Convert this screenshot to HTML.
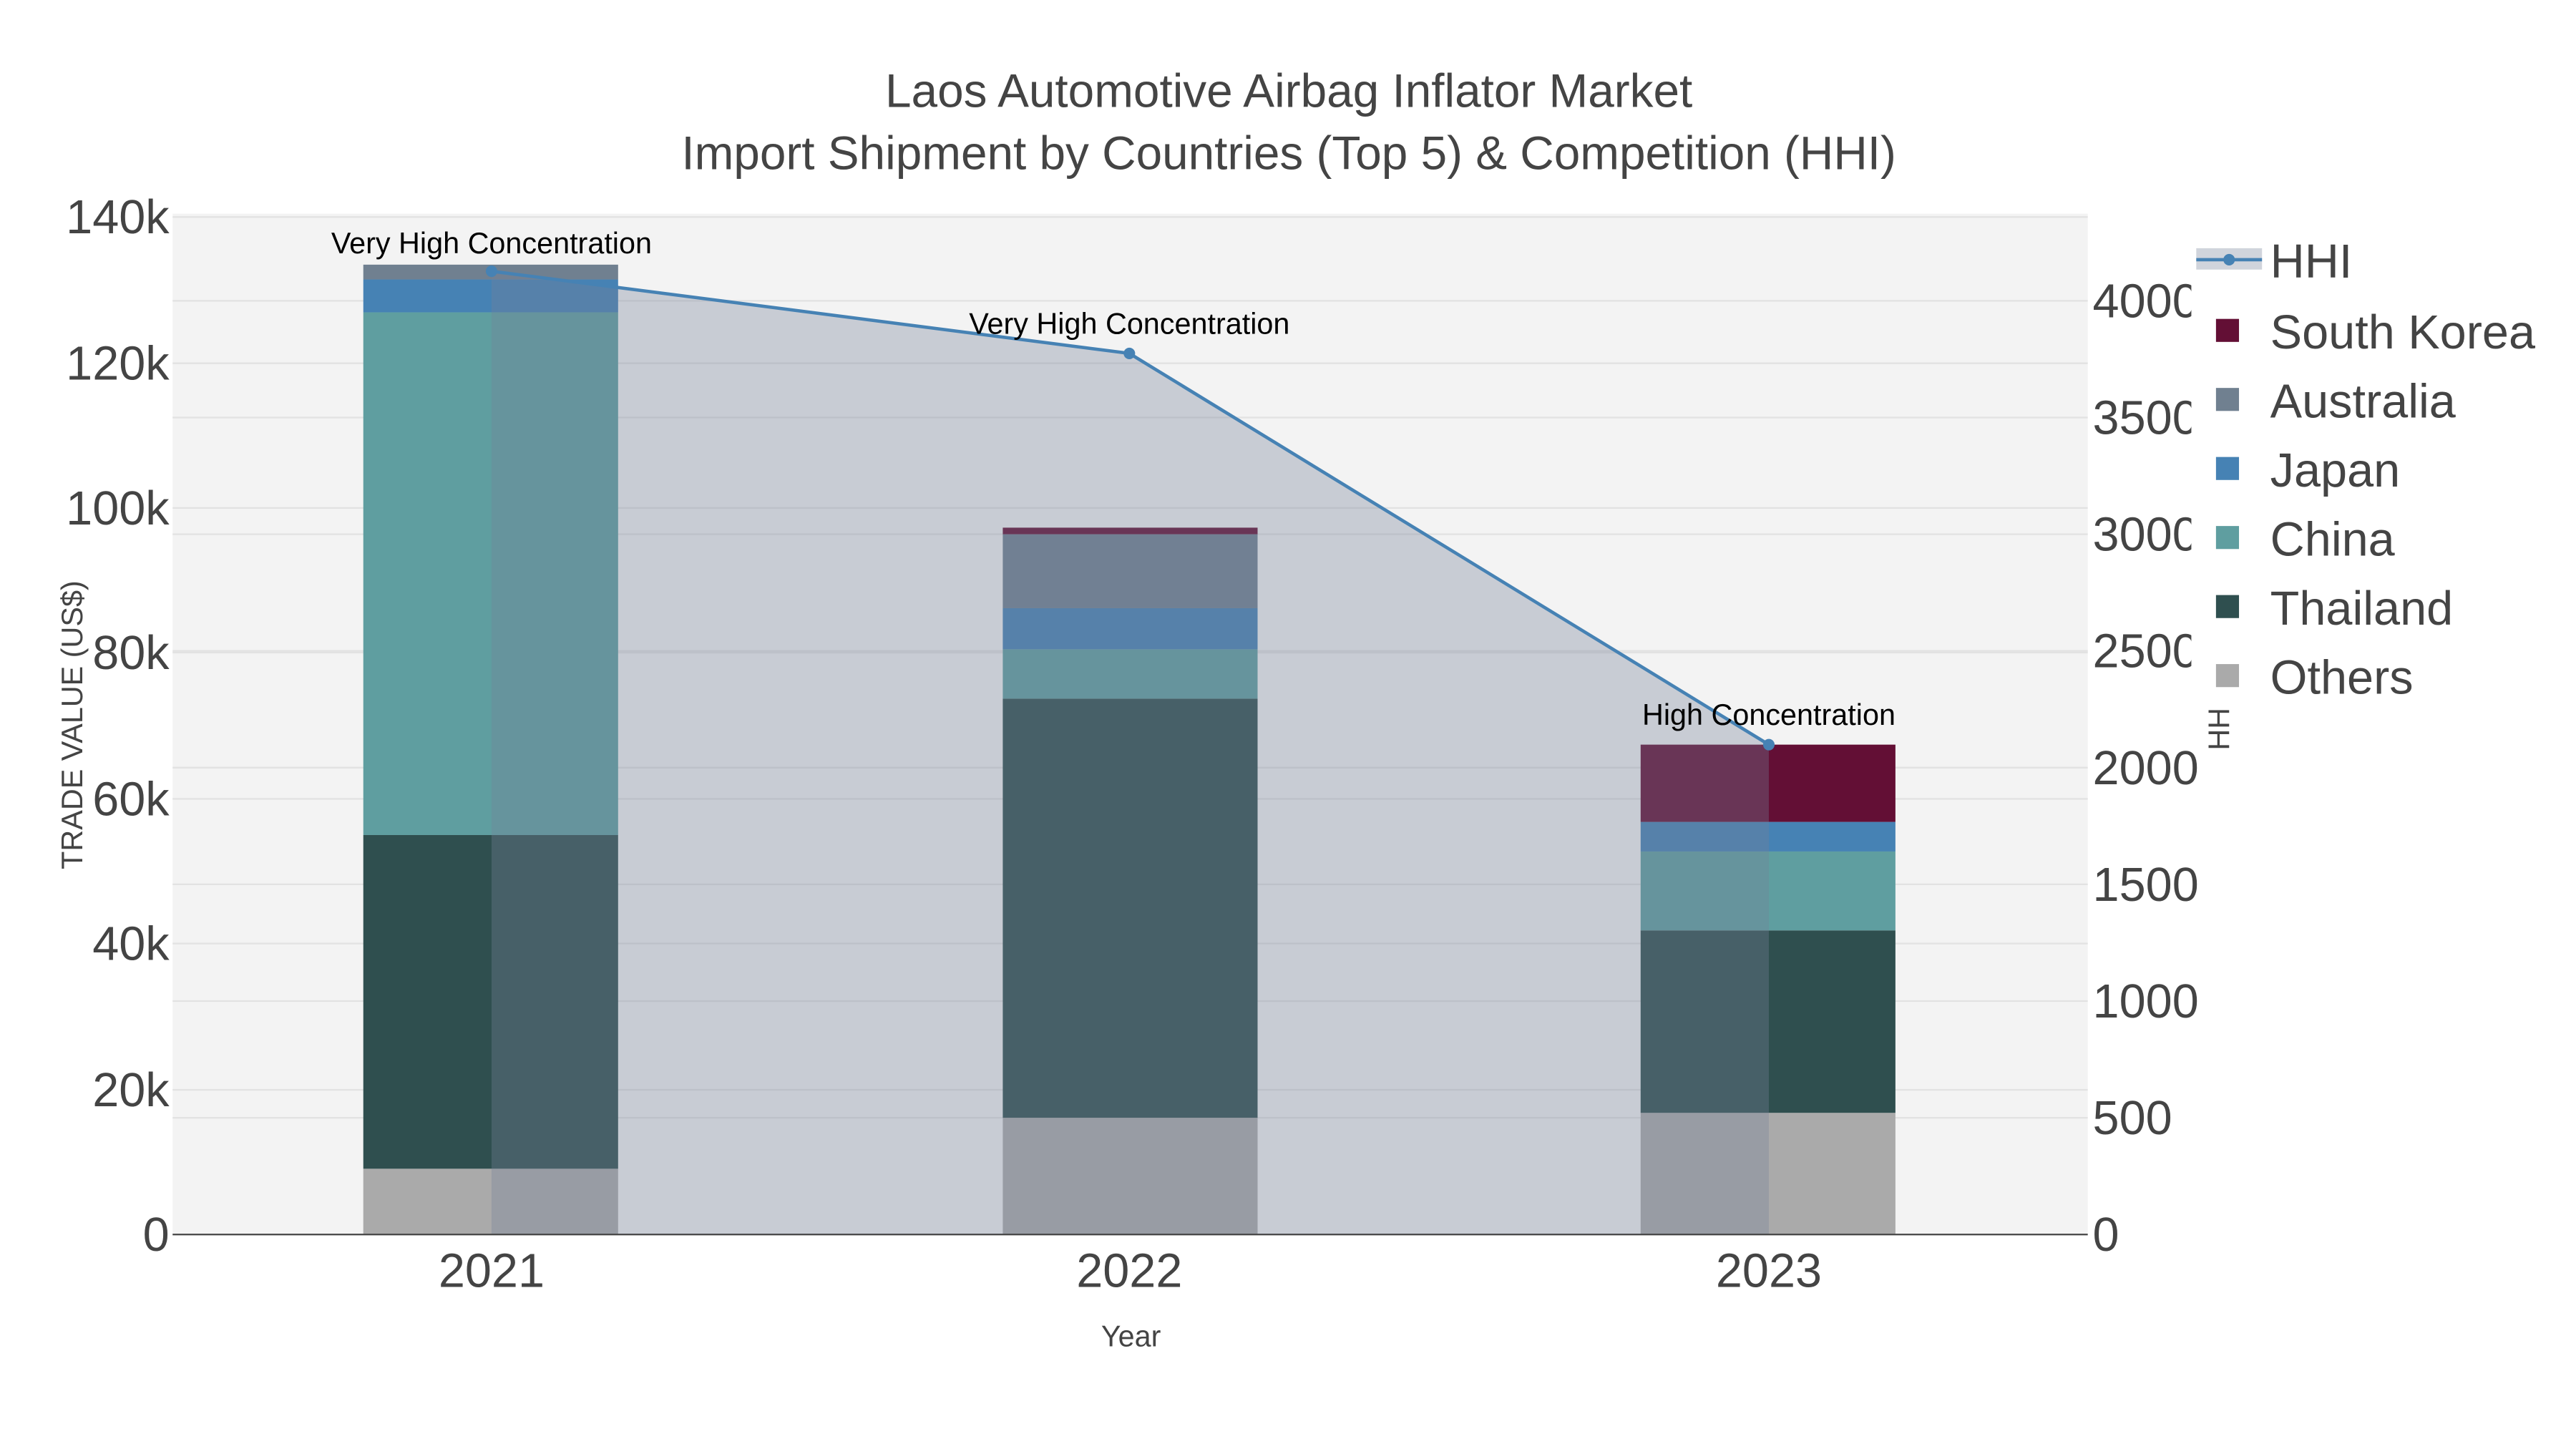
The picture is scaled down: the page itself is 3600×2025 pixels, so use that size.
<!DOCTYPE html>
<html><head><meta charset="utf-8"><style>
html,body{margin:0;padding:0;background:#fff;}
svg{display:block;}
text{font-family:"Liberation Sans",Arial,sans-serif;}
</style></head><body>
<svg width="3600" height="2025" viewBox="0 0 1567 881.5" preserveAspectRatio="none" xmlns="http://www.w3.org/2000/svg">
<rect x="0" y="0" width="1567" height="881.5" fill="#fff"/>
<rect x="105" y="130" width="1165" height="621" fill="#f3f3f3"/>
<g stroke="#e2e2e2" stroke-width="1">
<line x1="105" x2="1270" y1="663" y2="663"/><line x1="105" x2="1270" y1="574" y2="574"/>
<line x1="105" x2="1270" y1="486" y2="486"/><line x1="105" x2="1270" y1="397" y2="397"/>
<line x1="105" x2="1270" y1="309" y2="309"/><line x1="105" x2="1270" y1="221" y2="221"/>
<line x1="105" x2="1270" y1="132" y2="132"/>
<line x1="105" x2="1270" y1="680" y2="680"/><line x1="105" x2="1270" y1="609" y2="609"/>
<line x1="105" x2="1270" y1="538" y2="538"/><line x1="105" x2="1270" y1="467" y2="467"/>
<line x1="105" x2="1270" y1="396" y2="396"/><line x1="105" x2="1270" y1="325" y2="325"/>
<line x1="105" x2="1270" y1="254" y2="254"/><line x1="105" x2="1270" y1="183" y2="183"/>
</g>
<rect x="221" y="711" width="155" height="40" fill="#aaaaaa"/>
<rect x="221" y="508" width="155" height="203" fill="#2f4f4f"/>
<rect x="221" y="190" width="155" height="318" fill="#5f9ea0"/>
<rect x="221" y="170" width="155" height="20" fill="#4682b4"/>
<rect x="221" y="161" width="155" height="9" fill="#708090"/>
<rect x="610" y="680" width="155" height="71" fill="#aaaaaa"/>
<rect x="610" y="425" width="155" height="255" fill="#2f4f4f"/>
<rect x="610" y="395" width="155" height="30" fill="#5f9ea0"/>
<rect x="610" y="370" width="155" height="25" fill="#4682b4"/>
<rect x="610" y="325" width="155" height="45" fill="#708090"/>
<rect x="610" y="321" width="155" height="4" fill="#630f35"/>
<rect x="998" y="677" width="155" height="74" fill="#aaaaaa"/>
<rect x="998" y="566" width="155" height="111" fill="#2f4f4f"/>
<rect x="998" y="518" width="155" height="48" fill="#5f9ea0"/>
<rect x="998" y="500" width="155" height="18" fill="#4682b4"/>
<rect x="998" y="453" width="155" height="47" fill="#630f35"/>
<polygon points="299,751 299,165 687,215 1076,453 1076,751" fill="rgb(117,129,152)" fill-opacity="0.34"/>
<polyline points="299,165 687,215 1076,453" fill="none" stroke="#4682b4" stroke-width="2"/>
<circle cx="299" cy="165" r="3.5" fill="#4682b4"/><circle cx="687" cy="215" r="3.5" fill="#4682b4"/><circle cx="1076" cy="453" r="3.5" fill="#4682b4"/>
<line x1="105" x2="1270" y1="751" y2="751" stroke="#444" stroke-width="1"/>
<g font-size="18" fill="#000" text-anchor="middle">
<text x="299" y="154">Very High Concentration</text>
<text x="687" y="203">Very High Concentration</text>
<text x="1076" y="441">High Concentration</text>
</g>
<g fill="#444" text-anchor="middle" font-size="28.6">
<text x="784" y="65">Laos Automotive Airbag Inflator Market</text>
<text x="784" y="103">Import Shipment by Countries (Top 5) &amp; Competition (HHI)</text>
</g>
<g fill="#444" font-size="29" text-anchor="end">
<text x="103" y="761">0</text><text x="103" y="673">20k</text><text x="103" y="584">40k</text>
<text x="103" y="496">60k</text><text x="103" y="407">80k</text><text x="103" y="319">100k</text>
<text x="103" y="231">120k</text><text x="103" y="142">140k</text>
</g>
<g fill="#444" font-size="29" text-anchor="start">
<text x="1273" y="761">0</text><text x="1273" y="690">500</text><text x="1273" y="619">1000</text>
<text x="1273" y="548">1500</text><text x="1273" y="477">2000</text><text x="1273" y="406">2500</text>
<text x="1273" y="335">3000</text><text x="1273" y="264">3500</text><text x="1273" y="193">4000</text>
</g>
<g fill="#444" font-size="29" text-anchor="middle">
<text x="299" y="783">2021</text><text x="687" y="783">2022</text><text x="1076" y="783">2023</text>
</g>
<text x="688" y="819" fill="#444" font-size="18" text-anchor="middle">Year</text>
<text transform="translate(50,441) rotate(-90)" fill="#444" font-size="18" text-anchor="middle">TRADE VALUE (US$)</text>
<text transform="translate(1356,441) rotate(-90)" fill="#444" font-size="18" text-anchor="middle">HHI</text>
<rect x="1333" y="140" width="234" height="292" fill="#fff"/>
<rect x="1336" y="151" width="40" height="13" fill="rgb(117,129,152)" fill-opacity="0.34"/>
<line x1="1336" x2="1376" y1="158" y2="158" stroke="#4682b4" stroke-width="2"/>
<circle cx="1356" cy="158" r="3.5" fill="#4682b4"/>
<rect x="1348" y="194" width="14" height="14" fill="#630f35"/>
<rect x="1348" y="236" width="14" height="14" fill="#708090"/>
<rect x="1348" y="278" width="14" height="14" fill="#4682b4"/>
<rect x="1348" y="320" width="14" height="14" fill="#5f9ea0"/>
<rect x="1348" y="362" width="14" height="14" fill="#2f4f4f"/>
<rect x="1348" y="404" width="14" height="14" fill="#aaaaaa"/>
<g fill="#444" font-size="29">
<text x="1381" y="169">HHI</text>
<text x="1381" y="212">South Korea</text>
<text x="1381" y="254">Australia</text>
<text x="1381" y="296">Japan</text>
<text x="1381" y="338">China</text>
<text x="1381" y="380">Thailand</text>
<text x="1381" y="422">Others</text>
</g>
</svg>
</body></html>
